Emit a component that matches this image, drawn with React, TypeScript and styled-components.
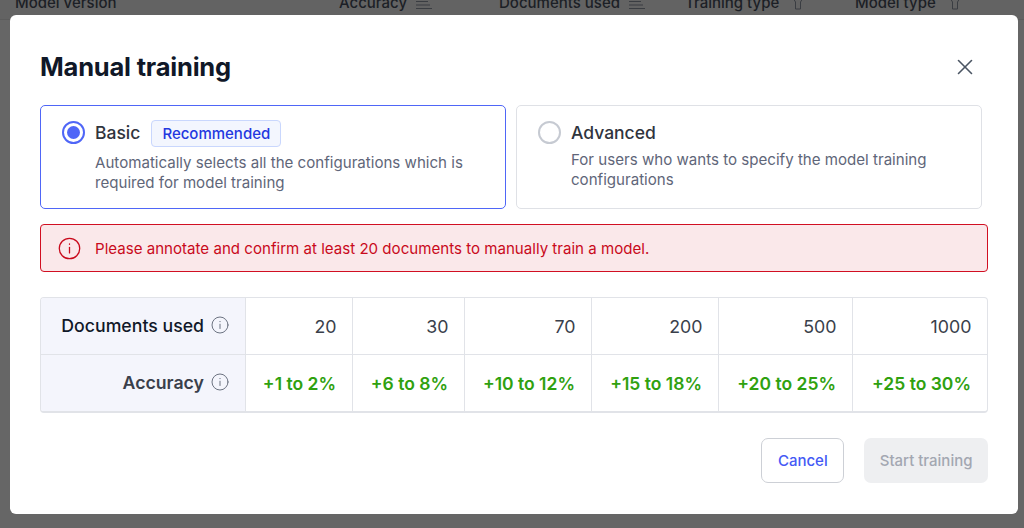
import React from 'react';
import styled, { createGlobalStyle } from 'styled-components';
import { X } from 'lucide-react';

const Global = createGlobalStyle`
  html, body { margin: 0; padding: 0; height: 100%; }
  body { font-family: Inter, 'Liberation Sans', sans-serif; background: #666666; overflow: hidden; }
  * { box-sizing: border-box; }
`;

const Page = styled.div`
  position: relative;
  width: 1024px;
  height: 528px;
  background: #666666;
  overflow: hidden;
`;

const BackHeader = styled.div`
  display: grid;
  grid-template-columns: 324px 160px 186px 170px 184px;
  align-items: end;
  height: 29px;
  margin-top: -9px;
  padding: 0 0 6px 15px;
  background: #636363;
  border-bottom: 1px solid #5c5c5c;
`;

const BackColumn = styled.div<{ $gap?: number }>`
  display: flex;
  align-items: center;
  gap: ${p => p.$gap ?? 8}px;
  font-size: 15px;
  line-height: 20px;
  font-weight: 500;
  color: #1c1f26;
`;

const Modal = styled.div`
  position: absolute;
  left: 10px;
  top: 15px;
  width: 1008px;
  height: 499px;
  padding: 30px 30px 0;
  background: #ffffff;
  border-radius: 6px;
`;

const ModalHead = styled.div`
  display: flex;
  justify-content: space-between;
  align-items: center;
  height: 44px;
  margin-bottom: 16px;
`;

const Title = styled.h1`
  margin: 0;
  font-size: 25.5px;
  line-height: 44px;
  font-weight: 700;
  letter-spacing: -0.2px;
  color: #101828;
`;

const Close = styled.button`
  display: flex;
  padding: 0;
  margin-right: 10px;
  border: 0;
  background: none;
  color: #4b5563;
`;

const Options = styled.div`
  display: grid;
  grid-template-columns: 466px 466px;
  gap: 10px;
  width: 942px;
`;

const Option = styled.div<{ $active?: boolean }>`
  display: flex;
  gap: 10px;
  height: 104px;
  padding: 15px 21px;
  border: 1px solid ${p => (p.$active ? '#4f66f7' : '#dfe1e6')};
  border-radius: 5px;
  background: #ffffff;
`;

const Radio = styled.span<{ $active?: boolean }>`
  flex: none;
  width: 23px;
  height: 23px;
  border-radius: 50%;
  border: 2.5px solid ${p => (p.$active ? '#4f66f7' : '#c6cad2')};
  padding: 3px;
  &::after {
    content: '';
    display: ${p => (p.$active ? 'block' : 'none')};
    width: 100%;
    height: 100%;
    border-radius: 50%;
    background: #4f66f7;
  }
`;

const OptionTitleRow = styled.div`
  display: flex;
  align-items: center;
  gap: 11px;
  height: 24px;
`;

const OptionTitle = styled.span`
  font-size: 17.5px;
  line-height: 24px;
  font-weight: 500;
  color: #30343d;
`;

const Badge = styled.span`
  display: inline-flex;
  align-items: center;
  height: 27px;
  padding: 0 10px;
  border: 1px solid #c9d7fd;
  border-radius: 4px;
  background: #f3f6fe;
  color: #2438e0;
  font-size: 15px;
  font-weight: 500;
`;

const OptionText = styled.p<{ $tight?: boolean }>`
  margin: ${p => (p.$tight ? '5px' : '8px')} 0 0;
  font-size: 15.1px;
  line-height: 20px;
  color: #5f6679;
`;

const Alert = styled.div`
  display: flex;
  align-items: center;
  gap: 14px;
  width: 948px;
  height: 48px;
  margin-top: 15px;
  padding: 0 17px;
  border: 1px solid #d10f22;
  border-radius: 4px;
  background: #fae8ea;
  color: #c90a1c;
  font-size: 15.1px;
`;

const Table = styled.div`
  display: grid;
  grid-template-columns: 205px 107px 112px 127px 127px 134px 134px;
  width: 948px;
  margin-top: 25px;
  border: 1px solid #e1e3e8;
  border-bottom-width: 2px;
  border-radius: 4px;
  overflow: hidden;
`;

const HeadCell = styled.div<{ $last?: boolean; $muted?: boolean }>`
  display: flex;
  justify-content: flex-end;
  align-items: center;
  gap: 7px;
  height: ${p => (p.$last ? '56px' : '57px')};
  padding: 0 16px 2px 0;
  background: #f4f5fc;
  border-right: 1px solid #e1e3e8;
  border-bottom: ${p => (p.$last ? 0 : '1px solid #e1e3e8')};
  font-size: 17.7px;
  font-weight: ${p => (p.$muted ? 600 : 500)};
  color: ${p => (p.$muted ? '#3a3f4b' : '#101828')};
`;

const Cell = styled.div<{ $good?: boolean; $last?: boolean; $end?: boolean }>`
  display: flex;
  justify-content: flex-end;
  align-items: center;
  height: ${p => (p.$last ? '56px' : '57px')};
  padding-right: ${p => (p.$good ? '16px' : '15.5px')};
  border-right: ${p => (p.$end ? 0 : '1px solid #e1e3e8')};
  border-bottom: ${p => (p.$last ? 0 : '1px solid #e1e3e8')};
  font-size: ${p => (p.$good ? '17.5px' : '17.8px')};
  font-weight: ${p => (p.$good ? 600 : 400)};
  color: ${p => (p.$good ? '#2fa10f' : '#3a3f4b')};
`;

const Footer = styled.div`
  display: flex;
  justify-content: flex-end;
  gap: 20px;
  width: 948px;
  margin-top: 25px;
`;

const Button = styled.button<{ $primary?: boolean }>`
  height: 45px;
  padding: 0 15.5px;
  border: ${p => (p.$primary ? 0 : '1px solid #cdd0d6')};
  border-radius: 7px;
  background: ${p => (p.$primary ? '#eeeff1' : '#ffffff')};
  color: ${p => (p.$primary ? '#a3a7b1' : '#4459f5')};
  font-family: inherit;
  font-size: 15px;
  font-weight: 500;
`;

const InfoIcon = ({ size = 18, color = '#6b7280', sw = 1 }: { size?: number; color?: string; sw?: number }) => (
  <svg width={size} height={size} viewBox="0 0 18 18" fill="none" stroke={color} strokeWidth={sw} strokeLinecap="round">
    <circle cx="9" cy="9" r="8" />
    <path d="M9 8.2v4.3" />
    <path d="M9 5.4v.3" />
  </svg>
);

const SortIcon = () => (
  <svg width="18" height="12" viewBox="0 0 18 12" fill="none" stroke="#3a3d42" strokeWidth="1">
    <path d="M1 4.5h12M1 8h14M1 11.5h16M15.5 0v3" />
  </svg>
);

const FilterIcon = () => (
  <svg width="12" height="14" viewBox="0 0 12 14" fill="none" stroke="#3a3d42" strokeWidth="1">
    <path d="M1 2l2.5 4v7h5V6L11 2" />
  </svg>
);

const docs = [20, 30, 70, 200, 500, 1000];
const accuracy = ['+1 to 2%', '+6 to 8%', '+10 to 12%', '+15 to 18%', '+20 to 25%', '+25 to 30%'];

export default function App() {
  return (
    <Page>
      <Global />
      <BackHeader>
        <BackColumn>Model version</BackColumn>
        <BackColumn>Accuracy <SortIcon /></BackColumn>
        <BackColumn>Documents used <SortIcon /></BackColumn>
        <BackColumn $gap={13}>Training type <FilterIcon /></BackColumn>
        <BackColumn $gap={13}>Model type <FilterIcon /></BackColumn>
      </BackHeader>
      <Modal>
        <ModalHead>
          <Title>Manual training</Title>
          <Close aria-label="Close"><X size={26} strokeWidth={1.5} /></Close>
        </ModalHead>
        <Options>
          <Option $active>
            <Radio $active />
            <div>
              <OptionTitleRow>
                <OptionTitle>Basic</OptionTitle>
                <Badge>Recommended</Badge>
              </OptionTitleRow>
              <OptionText>Automatically selects all the configurations which is required for model training</OptionText>
            </div>
          </Option>
          <Option>
            <Radio />
            <div>
              <OptionTitleRow>
                <OptionTitle>Advanced</OptionTitle>
              </OptionTitleRow>
              <OptionText $tight>For users who wants to specify the model training configurations</OptionText>
            </div>
          </Option>
        </Options>
        <Alert>
          <InfoIcon size={23} color="#c90a1c" sw={1} />
          Please annotate and confirm at least 20 documents to manually train a model.
        </Alert>
        <Table>
          <HeadCell>Documents used <InfoIcon /></HeadCell>
          {docs.map((d, i) => (
            <Cell key={d} $end={i === docs.length - 1}>{d}</Cell>
          ))}
          <HeadCell $last $muted>Accuracy <InfoIcon /></HeadCell>
          {accuracy.map((a, i) => (
            <Cell key={a} $good $last $end={i === accuracy.length - 1}>{a}</Cell>
          ))}
        </Table>
        <Footer>
          <Button>Cancel</Button>
          <Button $primary disabled>Start training</Button>
        </Footer>
      </Modal>
    </Page>
  );
}
